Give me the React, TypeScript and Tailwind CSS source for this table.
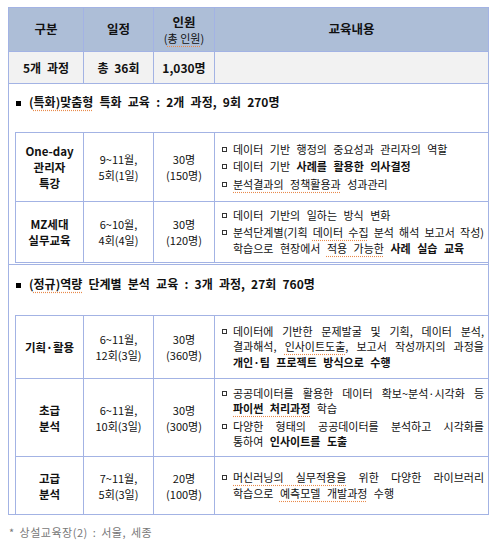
import React from 'react';

type Line = { t: React.ReactNode; full?: boolean };

const Wavy = ({ children }: { children: React.ReactNode }) => (
  <span className="underline decoration-dotted decoration-[#e98a4a] underline-offset-[3px]">
    {children}
  </span>
);

const Item = ({ lines }: { lines: Line[] }) => (
  <div className="flex">
    <span className="mt-[5px] mr-[6px] h-[5px] w-[5px] shrink-0 border border-[#333]" />
    <div className="min-w-0 flex-1">
      {lines.map((l, i) => (
        <div
          key={i}
          className={l.full ? 'text-justify [text-align-last:justify] [word-spacing:0px]' : ''}
        >
          {l.t}
        </div>
      ))}
    </div>
  </div>
);

type RowProps = {
  label: React.ReactNode;
  date: React.ReactNode;
  people: React.ReactNode;
  h: string;
  children: React.ReactNode;
};

const Row = ({ label, date, people, h, children }: RowProps) => (
  <div className={`grid grid-cols-[68px_70px_61px_1fr] border-b border-[#a3b3e4] ${h}`}>
    <div className="flex items-center justify-center border-r border-[#a3b3e4] text-center text-[11.5px] font-bold leading-[16px]">
      {label}
    </div>
    <div className="flex items-center justify-center border-r border-[#a3b3e4] text-center text-[11px] leading-[16px]">
      {date}
    </div>
    <div className="flex items-center justify-center border-r border-[#a3b3e4] text-center text-[11px] leading-[16px]">
      {people}
    </div>
    <div className="flex flex-col justify-center gap-[2px] pl-[7px] pr-[4px] text-[11px] leading-[15.5px] [word-spacing:4px]">
      {children}
    </div>
  </div>
);

const Heading = ({ children, h }: { children: React.ReactNode; h: string }) => (
  <div className={`pl-[7px] text-[12px] font-bold leading-[16px] [word-spacing:3.5px] ${h}`}>
    <span className="mr-[8px] inline-block h-[5px] w-[5px] bg-black align-middle" />
    {children}
  </div>
);

export default function App() {
  return (
    <div className="min-h-screen bg-white pl-[8px] pt-[7px] font-['Noto_Sans_CJK_KR','Noto_Sans',sans-serif] text-[#111]">
      <div className="w-[481px] border border-[#a3b3e4]">
        {/* header */}
        <div className="grid h-[44px] grid-cols-[75px_70px_61px_1fr] border-b border-[#a3b3e4] bg-[#adbed7] text-[12.5px] font-bold">
          <div className="flex items-center justify-center border-r border-[#a3b3e4]">구분</div>
          <div className="flex items-center justify-center border-r border-[#a3b3e4]">일정</div>
          <div className="flex flex-col items-center justify-center border-r border-[#a3b3e4] leading-[16px]">
            <span>인원</span>
            <span className="text-[11px] font-normal">
              (<Wavy>총 인원</Wavy>)
            </span>
          </div>
          <div className="flex items-center justify-center">교육내용</div>
        </div>

        {/* total */}
        <div className="grid h-[32px] grid-cols-[75px_70px_61px_1fr] border-b border-[#a3b3e4] bg-[#f2f2f2] text-[12px] font-bold [word-spacing:3px]">
          <div className="flex items-center justify-center border-r border-[#a3b3e4]">5개 과정</div>
          <div className="flex items-center justify-center border-r border-[#a3b3e4]">총 36회</div>
          <div className="flex items-center justify-center border-r border-[#a3b3e4]">1,030명</div>
          <div />
        </div>

        {/* 특화 */}
        <div className="border-b border-[#a3b3e4]">
          <Heading h="h-[48px] pt-[10px]">
            (<Wavy>특화)맞춤형</Wavy> 특화 교육 : 2개 과정, 9회 270명
          </Heading>
          <div className="mb-[1px] ml-[6px] border-l border-t border-[#a3b3e4]">
            <Row
              h="h-[69px]"
              label={<>One-day<br />관리자<br />특강</>}
              date={<>9~11월,<br />5회(1일)</>}
              people={<>30명<br />(150명)</>}
            >
              <Item lines={[{ t: '데이터 기반 행정의 중요성과 관리자의 역할' }]} />
              <Item lines={[{ t: <>데이터 기반 <b>사례를 활용한 의사결정</b></> }]} />
              <Item lines={[{ t: <><Wavy>분석결과의 정책활용과</Wavy> 성과관리</> }]} />
            </Row>
            <Row
              h="h-[61px]"
              label={<>MZ세대<br />실무교육</>}
              date={<>6~10월,<br />4회(4일)</>}
              people={<>30명<br />(120명)</>}
            >
              <Item lines={[{ t: '데이터 기반의 일하는 방식 변화' }]} />
              <Item
                lines={[
                  { t: <>분석단계별(기획 <Wavy>데이터 수집</Wavy> 분석 해석 보고서 작성)</>, full: true },
                  { t: <>학습으로 현장에서 <Wavy>적용 가능한</Wavy> <b>사례 실습 교육</b></> },
                ]}
              />
            </Row>
          </div>
        </div>

        {/* 정규 */}
        <div>
          <Heading h="h-[50px] pt-[11px]">
            (<Wavy>정규)역량</Wavy> 단계별 분석 교육 : 3개 과정, 27회 760명
          </Heading>
          <div className="ml-[6px] border-l border-t border-[#a3b3e4] [&>*:last-child]:border-b-0">
            <Row
              h="h-[63px]"
              label="기획·활용"
              date={<>6~11월,<br />12회(3일)</>}
              people={<>30명<br />(360명)</>}
            >
              <Item
                lines={[
                  { t: '데이터에 기반한 문제발굴 및 기획, 데이터 분석,', full: true },
                  { t: <>결과해석, <Wavy>인사이트도출</Wavy>, 보고서 작성까지의 과정을</>, full: true },
                  { t: <b>개인·팀 프로젝트 방식으로 수행</b> },
                ]}
              />
            </Row>
            <Row
              h="h-[78px]"
              label={<>초급<br />분석</>}
              date={<>6~11월,<br />10회(3일)</>}
              people={<>30명<br />(300명)</>}
            >
              <Item
                lines={[
                  { t: '공공데이터를 활용한 데이터 확보~분석·시각화 등', full: true },
                  { t: <><b><Wavy>파이썬 처리과정</Wavy></b> 학습</> },
                ]}
              />
              <Item
                lines={[
                  { t: '다양한 형태의 공공데이터를 분석하고 시각화를', full: true },
                  { t: <>통하여 <b>인사이트를 도출</b></> },
                ]}
              />
            </Row>
            <Row
              h="h-[57px]"
              label={<>고급<br />분석</>}
              date={<>7~11월,<br />5회(3일)</>}
              people={<>20명<br />(100명)</>}
            >
              <Item
                lines={[
                  { t: <><Wavy>머신러닝의 실무적용을</Wavy> 위한 다양한 라이브러리</>, full: true },
                  { t: <>학습으로 <Wavy>예측모델 개발과정</Wavy> 수행</> },
                ]}
              />
            </Row>
          </div>
        </div>
      </div>

      <div className="mt-[9px] pl-[1px] text-[11px] leading-[16px] tracking-[0.5px] text-[#777] [word-spacing:2px]">
        * 상설교육장(2) : 서울, 세종
      </div>
    </div>
  );
}
